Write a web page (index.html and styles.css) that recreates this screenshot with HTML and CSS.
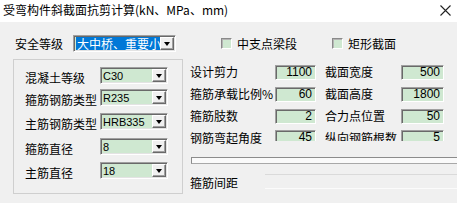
FILE: index.html
```html
<!DOCTYPE html>
<html lang="zh">
<head>
<meta charset="utf-8">
<link rel="stylesheet" href="styles.css">
</head>
<body>
<div class="titlebar">
  <span class="title">受弯构件斜截面抗剪计算(kN、MPa、mm)</span>
  <svg class="close" width="11" height="11" viewBox="0 0 11 11"><path d="M0.5 0.5L10.5 10.5M10.5 0.5L0.5 10.5" stroke="#222" stroke-width="1.1" fill="none"/></svg>
</div>

<div class="top-row">
  <span class="top-label">安全等级</span>
  <div class="combo safety">
    <span class="sel">大中桥、重要小</span>
    <span class="btn"><i class="tri"></i></span>
  </div>
  <label class="check first"><span class="box"></span><span>中支点梁段</span></label>
  <label class="check second"><span class="box"></span><span>矩形截面</span></label>
</div>

<div class="body">
  <div class="group">
    <span class="glabel">混凝土等级</span>
    <div class="combo small"><span class="val">C30</span><span class="btn"><i class="tri"></i></span></div>
    <span class="glabel">箍筋钢筋类型</span>
    <div class="combo small"><span class="val">R235</span><span class="btn"><i class="tri"></i></span></div>
    <span class="glabel">主筋钢筋类型</span>
    <div class="combo small"><span class="val">HRB335</span><span class="btn"><i class="tri"></i></span></div>
    <span class="glabel">箍筋直径</span>
    <div class="combo small"><span class="val">8</span><span class="btn"><i class="tri"></i></span></div>
    <span class="glabel">主筋直径</span>
    <div class="combo small"><span class="val">18</span><span class="btn"><i class="tri"></i></span></div>
  </div>

  <div class="right">
    <div class="fields">
      <span class="flabel">设计剪力</span><span class="input">1100</span>
      <span class="flabel col2">截面宽度</span><span class="input wide">500</span>

      <span class="flabel">箍筋承载比例%</span><span class="input">60</span>
      <span class="flabel col2">截面高度</span><span class="input wide">1800</span>

      <span class="flabel">箍筋肢数</span><span class="input">2</span>
      <span class="flabel col2">合力点位置</span><span class="input wide">50</span>

      <span class="flabel">钢筋弯起角度</span>
      <div class="cut"><span class="input">45</span></div>
      <div class="cut"><span class="flabel col2">纵向钢筋根数</span></div>
      <div class="cut"><span class="input wide">5</span></div>
    </div>
    <div class="frame"></div>
    <div class="spacing-row">
      <span class="slabel">箍筋间距</span>
      <div class="sbox"></div>
    </div>
  </div>
</div>
</body>
</html>
```
FILE: styles.css
```css
html, body {
  margin: 0;
  padding: 0;
}
body {
  width: 457px;
  height: 203px;
  overflow: hidden;
  background: #f0f0f0;
  font-family: "Noto Sans CJK SC", "Noto Sans", sans-serif;
  font-size: 12px;
  color: #000;
}
.titlebar {
  height: 22px;
  background: #fff;
  display: flex;
  align-items: center;
  justify-content: space-between;
  padding: 0 6px 0 3px;
  box-sizing: border-box;
}
.title {
  font-size: 12px;
  line-height: 16px;
  margin-top: -2px;
  white-space: nowrap;
}
.close {
  display: block;
  margin-top: -2px;
}

.top-row {
  display: flex;
  align-items: center;
  height: 17px;
  margin-top: 13px;
  padding-left: 15px;
}
.top-label {
  width: 58px;
  line-height: 17px;
}
.combo {
  position: relative;
  box-sizing: border-box;
  height: 17px;
  border: 1px solid;
  border-color: #a0a0a0 #ffffff #ffffff #a0a0a0;
  box-shadow: inset 1px 1px 0 #696969, inset -1px -1px 0 #e3e3e3;
  display: flex;
  align-items: stretch;
  overflow: hidden;
}
.combo.safety {
  width: 103px;
  background: #cfe8d1;
  padding: 1px 1px 1px 2px;
}
.sel {
  flex: 1;
  background: #0078d7;
  color: #fff;
  font-size: 12px;
  line-height: 13px;
  white-space: nowrap;
  overflow: hidden;
  padding-left: 1px;
}
.btn {
  width: 14px;
  flex: none;
  box-sizing: border-box;
  background: #f0f0f0;
  border: 1px solid;
  border-color: #ffffff #696969 #696969 #ffffff;
  box-shadow: inset -1px -1px 0 #a0a0a0;
  display: flex;
  align-items: center;
  justify-content: center;
}
.tri {
  width: 0;
  height: 0;
  border-left: 3.5px solid transparent;
  border-right: 3.5px solid transparent;
  border-top: 4px solid #000;
}
.check {
  display: flex;
  align-items: center;
  gap: 5px;
}
.check.first {
  margin-left: 45px;
}
.check.second {
  margin-left: 35px;
}
.box {
  width: 11px;
  height: 11px;
  box-sizing: border-box;
  background: #cfe8d1;
  border: 1px solid;
  border-color: #8a8a8a #ffffff #ffffff #8a8a8a;
  box-shadow: inset 1px 1px 0 #b4b4b4;
}

.body {
  display: flex;
  margin-top: 7px;
  padding-left: 13px;
}
.group {
  width: 170px;
  height: 135px;
  box-sizing: border-box;
  border: 1px solid #cfcfcf;
  padding: 7px 0 0 11px;
  display: grid;
  grid-template-columns: 75px 68px;
  grid-template-rows: 22px 24px 25px 24px 17px;
  align-items: start;
}
.glabel {
  line-height: 17px;
  margin-top: 2px;
  white-space: nowrap;
}
.combo.small {
  width: 68px;
  background: #cfe8d1;
  padding: 1px 1px 1px 2px;
}
.val {
  flex: 1;
  font-family: "Liberation Sans", Arial, sans-serif;
  font-size: 11px;
  line-height: 13px;
  padding-top: 1px;
  white-space: nowrap;
}

.right {
  margin-left: 7px;
  flex: 1;
  min-width: 0;
}
.fields {
  margin-top: 2px;
  display: grid;
  grid-template-columns: 85px 41px 85px 43px;
  grid-auto-rows: 22px;
  align-items: center;
}
.flabel {
  line-height: 22px;
  white-space: nowrap;
  display: block;
}
.flabel.col2 {
  padding-left: 9px;
}
.input {
  display: block;
  box-sizing: border-box;
  height: 15px;
  background: #cfe8d1;
  border: 1px solid;
  border-color: #a0a0a0 #ffffff #ffffff #a0a0a0;
  box-shadow: inset 1px 1px 0 #696969;
  text-align: right;
  padding-right: 3px;
  font-family: "Liberation Sans", Arial, sans-serif;
  font-size: 12px;
  line-height: 13px;
}
.cut {
  align-self: start;
  height: 14px;
  overflow: hidden;
}
.cut .input {
  margin-top: 3px;
}
.frame {
  margin-top: 8px;
  margin-left: 1px;
  height: 7px;
  box-sizing: border-box;
  border: 1px solid;
  border-color: #8c8c8c #a8a8a8 #a8a8a8 #8c8c8c;
  border-right: none;
  background: #fafafa;
}
.spacing-row {
  display: flex;
  align-items: flex-start;
  margin-top: 10px;
}
.slabel {
  width: 75px;
  flex: none;
  line-height: 16px;
  margin-top: 1px;
}
.sbox {
  flex: 1;
  height: 15px;
  box-sizing: border-box;
  border-top: 1px solid #dadada;
  border-bottom: 1px solid #fbfbfb;
}
```
